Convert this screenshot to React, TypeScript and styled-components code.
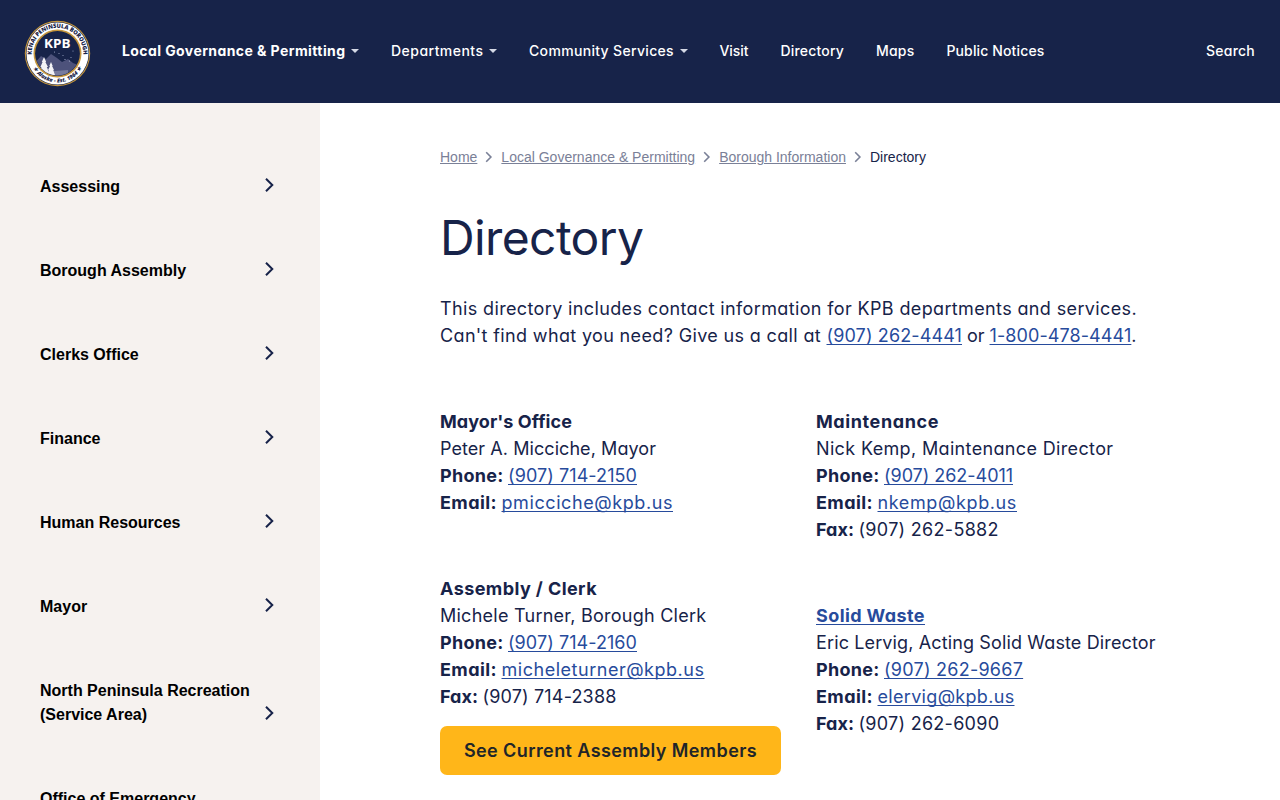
import React from 'react';
import styled, { createGlobalStyle } from 'styled-components';

const navy = '#172349';
const blue = '#274b9c';

const GlobalStyle = createGlobalStyle`
  * { box-sizing: border-box; }
  body {
    margin: 0;
    height: 800px;
    overflow: hidden;
    background: #fff;
    color: ${navy};
    font-family: Inter, "Liberation Sans", sans-serif;
    font-feature-settings: 'cv11';
  }
`;

const Header = styled.header`
  display: flex;
  align-items: center;
  height: 103px;
  padding: 0 25px 0 24px;
  background: ${navy};
`;

const Seal = styled.svg`
  flex: none;
  width: 67px;
  height: 67px;
  margin-top: 4px;
`;

const Nav = styled.nav`
  display: flex;
  flex: 1;
  gap: 32px;
  margin-left: 31px;
`;

const NavLink = styled.a<{ $ls: number; $active?: boolean }>`
  display: flex;
  align-items: center;
  margin-bottom: 2px;
  color: #fff;
  font-size: 14px;
  line-height: 22px;
  font-weight: ${(p) => (p.$active ? 700 : 500)};
  letter-spacing: ${(p) => p.$ls}px;
  white-space: nowrap;
`;

const Caret = styled.span`
  margin: 0 0 0 5.5px;
  border: 4px solid transparent;
  border-top: 4px solid #d5d9e6;
  border-bottom: 0;
`;

const Body = styled.div`
  display: flex;
  height: 697px;
`;

const Sidebar = styled.aside`
  flex: none;
  width: 320px;
  padding-top: 42px;
  background: #f6f2ef;
  overflow: hidden;
`;

const SideItem = styled.a`
  display: flex;
  align-items: flex-end;
  justify-content: space-between;
  padding: 30px 44px 30px 40px;
  color: #000;
  font: bold 16px/24px "Liberation Sans", Arial, sans-serif;
`;

const SideLabel = styled.span`
  width: 215px;
`;

const SideChevron = styled.svg`
  flex: none;
  width: 12px;
  height: 16px;
  margin-bottom: 6px;
`;

const Main = styled.main`
  flex: 1;
  padding: 42px 0 0 120px;
`;

const Crumbs = styled.div`
  display: flex;
  align-items: center;
  height: 24px;
  font: 14px/24px "Liberation Sans", Arial, sans-serif;
  white-space: nowrap;
`;

const Crumb = styled.a`
  color: #7a8097;
  text-decoration: underline;
`;

const CrumbChevron = styled.svg`
  width: 8px;
  height: 12px;
  margin: 0 8px;
`;

const Title = styled.h1`
  margin: 33px 0 0;
  font-size: 48px;
  line-height: 72px;
  font-weight: 400;
  letter-spacing: -0.6px;
`;

const Text = styled.p`
  margin: 0;
  font-size: 18px;
  line-height: 27px;
  font-weight: 400;
  white-space: pre;
`;

const Intro = styled.div`
  margin-top: 21px;
`;

const Columns = styled.div`
  display: grid;
  grid-template-columns: 376px 400px;
  margin-top: 59px;
`;

const Contact = styled.section<{ $gap?: number }>`
  margin-bottom: ${(p) => p.$gap ?? 0}px;
`;

const Run = styled.span<{ $ls: number }>`
  letter-spacing: ${(p) => p.$ls}px;
`;

const Strong = styled(Run)`
  font-weight: 700;
`;

const Link = styled(Run)<{ $bold?: boolean }>`
  color: ${blue};
  font-weight: ${(p) => (p.$bold ? 700 : 400)};
  text-decoration: underline;
  text-decoration-thickness: 1px;
  text-underline-offset: 2px;
  text-decoration-skip-ink: none;
`;

const Button = styled.button`
  display: block;
  width: 341px;
  height: 49px;
  margin-top: 16px;
  padding: 0;
  border: 0;
  border-radius: 7px;
  background: #ffb619;
  color: #212529;
  font: 600 18px/27px Inter, sans-serif;
  font-feature-settings: 'cv11';
  letter-spacing: 0.41px;
`;

type Piece = [text: string, tracking: number];

interface Entry {
  heading: Piece;
  linked?: boolean;
  person: Piece;
  phone: Piece;
  email: Piece;
  fax?: Piece;
}

const navItems: { label: string; ls: number; menu?: boolean; active?: boolean }[] = [
  { label: 'Local Governance & Permitting', ls: 0.415, menu: true, active: true },
  { label: 'Departments', ls: 0.47, menu: true },
  { label: 'Community Services', ls: 0.326, menu: true },
  { label: 'Visit', ls: -0.06 },
  { label: 'Directory', ls: 0.182 },
  { label: 'Maps', ls: 0.2 },
  { label: 'Public Notices', ls: 0.135 },
];

const sideItems = [
  'Assessing',
  'Borough Assembly',
  'Clerks Office',
  'Finance',
  'Human Resources',
  'Mayor',
  'North Peninsula Recreation (Service Area)',
  'Office of Emergency Management',
];

const mayor: Entry = {
  heading: ["Mayor's Office", 0.065],
  person: ['Peter A. Micciche, Mayor', 0.065],
  phone: ['(907) 714-2150', 0.075],
  email: ['pmicciche@kpb.us', 0.585],
};
const clerk: Entry = {
  heading: ['Assembly / Clerk', 0.42],
  person: ['Michele Turner, Borough Clerk', 0.25],
  phone: ['(907) 714-2160', 0.059],
  email: ['micheleturner@kpb.us', 0.523],
  fax: ['(907) 714-2388', 0.162],
};
const maintenance: Entry = {
  heading: ['Maintenance', 0.598],
  person: ['Nick Kemp, Maintenance Director', 0.35],
  phone: ['(907) 262-4011', -0.04],
  email: ['nkemp@kpb.us', 0.622],
  fax: ['(907) 262-5882', 0.3],
};
const solidWaste: Entry = {
  heading: ['Solid Waste', 0.405],
  linked: true,
  person: ['Eric Lervig, Acting Solid Waste Director', 0.13],
  phone: ['(907) 262-9667', 0.25],
  email: ['elervig@kpb.us', 0.317],
  fax: ['(907) 262-6090', 0.27],
};

function ContactCard({ entry, gap, children }: { entry: Entry; gap?: number; children?: React.ReactNode }) {
  return (
    <Contact $gap={gap}>
      <Text>
        {entry.linked ? (
          <Link $bold $ls={entry.heading[1]}>{entry.heading[0]}</Link>
        ) : (
          <Strong $ls={entry.heading[1]}>{entry.heading[0]}</Strong>
        )}
      </Text>
      <Text><Run $ls={entry.person[1]}>{entry.person[0]}</Run></Text>
      <Text><Strong $ls={0.268}>{'Phone: '}</Strong><Link $ls={entry.phone[1]}>{entry.phone[0]}</Link></Text>
      <Text><Strong $ls={0.393}>{'Email: '}</Strong><Link $ls={entry.email[1]}>{entry.email[0]}</Link></Text>
      {entry.fax && (
        <Text><Strong $ls={0.078}>{'Fax: '}</Strong><Run $ls={entry.fax[1]}>{entry.fax[0]}</Run></Text>
      )}
      {children}
    </Contact>
  );
}

function BoroughSeal() {
  return (
    <Seal viewBox="0 0 67 67">
      <defs>
        <path id="sealTop" d="M9.3 42.5 A25.8 25.8 0 1 1 57.7 42.5" />
        <path id="sealBottom" d="M9.6 49.5 A28.6 28.6 0 0 0 57.4 49.5" />
        <clipPath id="sealInner"><circle cx="33.5" cy="33.5" r="22" /></clipPath>
      </defs>
      <circle cx="33.5" cy="33.5" r="32.7" fill="#c5963d" />
      <circle cx="33.5" cy="33.5" r="31.6" fill={navy} />
      <circle cx="33.5" cy="33.5" r="31" fill="#fff" />
      <circle cx="33.5" cy="33.5" r="24" fill="#c5963d" />
      <circle cx="33.5" cy="33.5" r="22.4" fill={navy} />
      <g clipPath="url(#sealInner)">
        <path d="M10 44 L17 36 L22 39 L27 34 L33 38 L38 42 L44 39 L49 43 L57 46 V58 H10Z" fill="#4d527b" />
        <path d="M10 49 L20 47 L31 51 L44 50 L44 58 H10Z" fill="#777b9e" />
        <path d="M20 37 L22.2 42 L21.4 42 L24 47 L22.8 47 L25 53 H15.5 L17.5 47 L16.4 47 L18.6 42 L17.8 42Z" fill="#f3f3f6" />
        <path d="M27 42 L28.7 46 L28.1 46 L30 50 L29.2 50 L31 55 H23.5 L25 50 L24.2 50 L26 46 L25.3 46Z" fill="#f3f3f6" />
      </g>
      <g fill="#aeb8d4">
        <circle cx="30.5" cy="32" r=".5" /><circle cx="35" cy="33.5" r=".5" />
        <circle cx="39" cy="35.5" r=".5" /><circle cx="41" cy="39.5" r=".6" />
        <circle cx="45.5" cy="41" r=".6" /><circle cx="47" cy="37.5" r=".5" />
        <circle cx="49" cy="31" r=".5" />
      </g>
      <text x="33.3" y="28" textAnchor="middle" fill="#fff" fontFamily="Open Sans, sans-serif" fontWeight="700" fontSize="12.3" textLength="26.5" lengthAdjust="spacingAndGlyphs">KPB</text>
      <text fill={navy} fontFamily="Open Sans, sans-serif" fontWeight="800" fontSize="5.9">
        <textPath href="#sealTop" startOffset="8" textLength="83" lengthAdjust="spacingAndGlyphs">KENAI PENINSULA BOROUGH</textPath>
      </text>
      <text fill={navy} fontFamily="Open Sans, sans-serif" fontWeight="800" fontStyle="italic" fontSize="5.4">
        <textPath href="#sealBottom" startOffset="50%" textAnchor="middle">★ Alaska - Est. 1964 ★</textPath>
      </text>
    </Seal>
  );
}

function CrumbArrow() {
  return (
    <CrumbChevron viewBox="0 0 8 12">
      <path d="M1.2 1.3 L5.9 6 L1.2 10.7" fill="none" stroke="#7a8097" strokeWidth="1.6" />
    </CrumbChevron>
  );
}

export default function App() {
  return (
    <>
      <GlobalStyle />
      <Header>
        <BoroughSeal />
        <Nav>
          {navItems.map((item) => (
            <NavLink key={item.label} $ls={item.ls} $active={item.active}>
              {item.label}
              {item.menu && <Caret />}
            </NavLink>
          ))}
        </Nav>
        <NavLink $ls={0.237}>Search</NavLink>
      </Header>
      <Body>
        <Sidebar>
          {sideItems.map((label) => (
            <SideItem key={label}>
              <SideLabel>{label}</SideLabel>
              <SideChevron viewBox="0 0 12 16">
                <path d="M2 1.7 L8.3 8 L2 14.3" fill="none" stroke={navy} strokeWidth="2" />
              </SideChevron>
            </SideItem>
          ))}
        </Sidebar>
        <Main>
          <Crumbs>
            <Crumb>Home</Crumb><CrumbArrow />
            <Crumb>Local Governance &amp; Permitting</Crumb><CrumbArrow />
            <Crumb>Borough Information</Crumb><CrumbArrow />
            <span>Directory</span>
          </Crumbs>
          <Title>Directory</Title>
          <Intro>
            <Text><Run $ls={0.367}>This directory includes contact information for KPB departments and services.</Run></Text>
            <Text>
              <Run $ls={0.355}>{"Can't find what you need? Give us a call at "}</Run>
              <Link $ls={0.122}>(907) 262-4441</Link>
              <Run $ls={-0.05}>{' or '}</Run>
              <Link $ls={0.09}>1-800-478-4441</Link>.
            </Text>
          </Intro>
          <Columns>
            <div>
              <ContactCard entry={mayor} gap={59} />
              <ContactCard entry={clerk}><Button>See Current Assembly Members</Button></ContactCard>
            </div>
            <div>
              <ContactCard entry={maintenance} gap={59} />
              <ContactCard entry={solidWaste} />
            </div>
          </Columns>
        </Main>
      </Body>
    </>
  );
}
